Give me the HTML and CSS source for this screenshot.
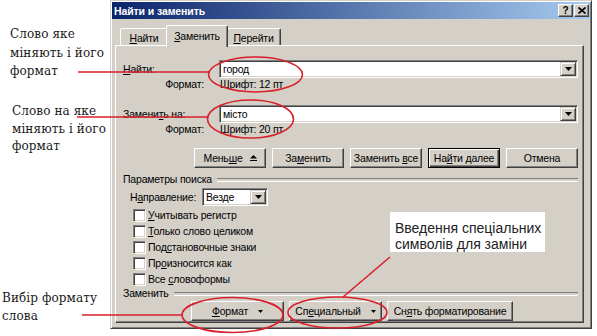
FILE: index.html
```html
<!DOCTYPE html>
<html lang="uk">
<head>
<meta charset="utf-8">
<title>Найти и заменить</title>
<link rel="stylesheet" href="styles.css">
</head>
<body>
<div class="stage">
  <div class="dialog">
    <div class="titlebar">
      <span class="title">Найти и заменить</span>
      <span class="tb-btn q">?</span>
      <span class="tb-btn x"><svg width="8" height="7" viewBox="0 0 8 7"><path d="M0.5 0.5L7.5 6.5M7.5 0.5L0.5 6.5" stroke="#000" stroke-width="1.7"/></svg></span>
    </div>
    <div class="tabs">
      <div class="tab t1"><span><u>Н</u>айти</span></div>
      <div class="tab active"><span><u>З</u>аменить</span></div>
      <div class="tab t3"><span><u>П</u>ерейти</span></div>
    </div>
    <div class="panel">
      <div class="field-row">
        <span class="flabel"><u>Н</u>айти:</span>
        <div class="combo"><span class="ctext">город</span><span class="drop"><svg width="7" height="4" viewBox="0 0 7 4"><path d="M0 0H7L3.5 4Z" fill="#000"/></svg></span></div>
      </div>
      <div class="fmt-row"><span class="fmt-label">Формат:</span><span class="fmt-val">Шрифт: 12 пт</span></div>

      <div class="field-row second">
        <span class="flabel">Замени<u>т</u>ь на:</span>
        <div class="combo"><span class="ctext">місто</span><span class="drop"><svg width="7" height="4" viewBox="0 0 7 4"><path d="M0 0H7L3.5 4Z" fill="#000"/></svg></span></div>
      </div>
      <div class="fmt-row"><span class="fmt-label">Формат:</span><span class="fmt-val">Шрифт: 20 пт</span></div>

      <div class="btn-row">
        <div class="btn"><span>Мень<u>ш</u>е</span><svg class="less" width="7" height="6" viewBox="0 0 7 6"><path d="M3.5 0L7 3.5H0Z" fill="#000"/><rect x="0" y="5" width="7" height="1" fill="#000"/></svg></div>
        <div class="btn"><span>За<u>м</u>енить</span></div>
        <div class="btn"><span>Заменить <u>в</u>се</span></div>
        <div class="btn default"><span>На<u>й</u>ти далее</span></div>
        <div class="btn"><span>Отмена</span></div>
      </div>

      <div class="group-head"><span>Параметры поиска</span></div>
      <div class="dir-row">
        <span class="dir-label">Н<u>а</u>правление:</span>
        <div class="select"><span class="ctext">Везде</span><span class="drop"><svg width="7" height="4" viewBox="0 0 7 4"><path d="M0 0H7L3.5 4Z" fill="#000"/></svg></span></div>
      </div>
      <div class="checks">
        <div class="check"><span class="box"></span><span><u>У</u>читывать регистр</span></div>
        <div class="check"><span class="box"></span><span><u>Т</u>олько слово целиком</span></div>
        <div class="check"><span class="box"></span><span>Под<u>с</u>тановочные знаки</span></div>
        <div class="check"><span class="box"></span><span>Пр<u>о</u>износится как</span></div>
        <div class="check"><span class="box"></span><span>Все <u>с</u>ловоформы</span></div>
      </div>
      <div class="group-head tight"><span>Заменить</span></div>
      <div class="btn-row bottom">
        <div class="btn w93"><span><u>Ф</u>ормат</span><svg class="tri" width="5" height="3" viewBox="0 0 5 3"><path d="M0 0H5L2.5 3Z" fill="#000"/></svg></div>
        <div class="btn w93"><span>Сп<u>е</u>циальный</span><svg class="tri" width="5" height="3" viewBox="0 0 5 3"><path d="M0 0H5L2.5 3Z" fill="#000"/></svg></div>
        <div class="btn w126"><span>Сн<u>я</u>ть форматирование</span></div>
      </div>
    </div>
  </div>

  <div class="note n1">Слово яке<br>міняють і його<br>формат</div>
  <div class="note n2">Слово на яке<br>міняють і його<br>формат</div>
  <div class="note n3">Вибір формату<br>слова</div>
  <div class="callout">Введення спеціальних<br>символів для заміни</div>

  <svg class="overlay" width="597" height="336" viewBox="0 0 597 336">
    <g fill="none" stroke="#d8202a" stroke-width="1.6">
      <ellipse cx="255.5" cy="74.5" rx="47" ry="17.5"/>
      <ellipse cx="250.5" cy="119" rx="43" ry="19"/>
      <ellipse cx="232.5" cy="315" rx="50.5" ry="17.5"/>
      <ellipse cx="337.5" cy="312.5" rx="49.5" ry="15.5"/>
      <path d="M78 72H209"/>
      <path d="M77 117H208"/>
      <path d="M82 315H182"/>
      <path d="M390 257L343 297"/>
    </g>
  </svg>
</div>
</body>
</html>
```
FILE: styles.css
```css
* { box-sizing: border-box; }
html, body { margin: 0; padding: 0; }
body {
  background: #fff;
  width: 597px;
  height: 336px;
  overflow: hidden;
  font-family: "Liberation Sans", Arial, sans-serif;
}
.stage {
  position: relative;
  width: 597px;
  height: 336px;
  padding-left: 110px;
}
u { text-decoration: underline; text-underline-offset: 1px; }

.dialog {
  width: 482px;
  height: 329px;
  background: #d4d0c8;
  border: 1px solid;
  border-color: #d4d0c8 #404040 #404040 #d4d0c8;
  box-shadow: inset 1px 1px #fff, inset -1px -1px #808080;
  padding: 1px;
  display: flex;
  flex-direction: column;
  font-size: 10.5px;
  letter-spacing: -0.2px;
  color: #000;
}
.titlebar {
  height: 17px;
  flex: none;
  display: flex;
  align-items: center;
  gap: 1px;
  background: linear-gradient(90deg, #0a246a, #a6caf0);
  padding: 0 1px 0 2px;
}
.title {
  flex: 1;
  color: #fff;
  font-weight: bold;
  font-size: 10.5px;
  letter-spacing: -0.1px;
}
.tb-btn {
  width: 15px;
  height: 13px;
  background: #d4d0c8;
  border: 1px solid;
  border-color: #fff #404040 #404040 #fff;
  box-shadow: inset -1px -1px #808080;
  display: flex;
  align-items: center;
  justify-content: center;
  font-weight: bold;
  font-size: 10px;
  line-height: 1;
}

.tabs {
  flex: none;
  height: 20px;
  margin-top: 6px;
  padding-left: 8px;
  display: flex;
  align-items: flex-start;
  position: relative;
  z-index: 1;
}
.tab {
  height: 17px;
  margin-top: 3px;
  background: #d4d0c8;
  border-top: 1px solid #fff;
  border-left: 1px solid #fff;
  border-right: 1px solid #404040;
  box-shadow: inset -1px 0 #808080;
  border-radius: 2px 2px 0 0;
  display: flex;
  align-items: center;
  justify-content: center;
  padding-top: 1px;
}
.tab.t1 { width: 48px; }
.tab.t3 { width: 55px; }
.tab.active {
  width: 62px;
  height: 22px;
  margin: 0 -2px;
  padding-bottom: 2px;
  position: relative;
  z-index: 2;
}

.panel {
  flex: none;
  margin-left: 3px;
  width: 469px;
  height: 278px;
  border: 1px solid;
  border-color: #fff #404040 #404040 #fff;
  box-shadow: inset -1px -1px #808080;
  padding: 14px 5px 0 7px;
}

.field-row {
  display: grid;
  grid-template-columns: 96px 1fr;
  align-items: center;
  height: 18px;
}
.field-row.second { margin-top: 15px; }
.combo, .select {
  height: 18px;
  background: #fff;
  border: 1px solid;
  border-color: #808080 #fff #fff #808080;
  box-shadow: inset 1px 1px #404040, inset -1px -1px #d4d0c8;
  display: flex;
  align-items: center;
  padding: 1px 1px 1px 3px;
}
.ctext { flex: 1; }
.drop {
  width: 16px;
  height: 14px;
  background: #d4d0c8;
  border: 1px solid;
  border-color: #d4d0c8 #404040 #404040 #d4d0c8;
  box-shadow: inset 1px 1px #fff, inset -1px -1px #808080;
  display: flex;
  align-items: center;
  justify-content: center;
}
.fmt-row {
  display: grid;
  grid-template-columns: 96px 1fr;
  height: 12px;
  line-height: 12px;
}
.fmt-label { text-align: right; padding-right: 15px; }
.fmt-val { padding-left: 1px; }

.btn-row {
  display: flex;
  justify-content: flex-end;
  gap: 6px;
  margin-top: 13px;
  height: 20px;
}
.btn {
  width: 72px;
  height: 20px;
  background: #d4d0c8;
  border: 1px solid;
  border-color: #fff #404040 #404040 #fff;
  box-shadow: inset -1px -1px #808080;
  display: flex;
  align-items: center;
  justify-content: center;
  white-space: nowrap;
}
.btn.default {
  border-color: #000;
  box-shadow: inset 1px 1px #fff, inset -1px -1px #404040, inset -2px -2px #808080;
}
.btn .less { margin-left: 7px; }
.btn .tri { margin-left: 10px; }
.btn-row.bottom {
  justify-content: flex-start;
  gap: 5px;
  margin-top: 2px;
  padding-left: 68px;
}
.btn.w93 { width: 93px; }
.btn.w126 { width: 126px; }

.group-head {
  display: flex;
  align-items: center;
  height: 12px;
  line-height: 12px;
  margin-top: 5px;
}
.group-head::after {
  content: "";
  flex: 1;
  height: 2px;
  margin-left: 5px;
  margin-top: 1px;
  border-top: 1px solid #808080;
  border-bottom: 1px solid #fff;
}
.group-head.tight { margin-top: 0; }

.dir-row {
  display: flex;
  align-items: center;
  height: 18px;
  margin-top: 3px;
  padding-left: 7px;
}
.dir-label { width: 72px; }
.select { width: 66px; }

.checks { margin-top: 1px; }
.check {
  height: 16px;
  display: flex;
  align-items: center;
  padding-left: 10px;
}
.box {
  width: 13px;
  height: 13px;
  background: #fff;
  border: 1px solid;
  border-color: #808080 #fff #fff #808080;
  box-shadow: inset 1px 1px #404040, inset -1px -1px #d4d0c8;
  margin-right: 2px;
}

.note {
  position: absolute;
  font-family: "DejaVu Serif", "Liberation Serif", serif;
  font-size: 12px;
  letter-spacing: 0.1px;
  color: #1a1a1a;
  white-space: nowrap;
}
.n1 { left: 10px; top: 25px; line-height: 18.5px; }
.n2 { left: 12px; top: 103px; line-height: 17.5px; }
.n3 { left: 2px; top: 290px; line-height: 17.5px; }

.callout {
  position: absolute;
  left: 390px;
  top: 212px;
  width: 155px;
  height: 40px;
  padding: 8px 5px 0;
  background: #fff;
  font-family: "Liberation Sans", Arial, sans-serif;
  font-size: 14px;
  line-height: 16px;
  color: #222;
  white-space: nowrap;
}
.overlay {
  position: absolute;
  left: 0;
  top: 0;
  pointer-events: none;
}
```
